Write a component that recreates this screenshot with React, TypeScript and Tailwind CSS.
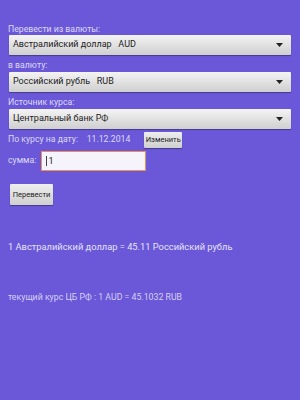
import React from 'react'

function Spinner({ text }: { text: string }) {
  return (
    <div className="mx-[9px] h-[20px] flex items-center justify-between pl-[4px] pr-[8px] bg-gradient-to-b from-[#f4f4f4] to-[#cfcfcf] rounded-[1px] shadow-[0_1px_1px_rgba(0,0,0,0.35)]">
      <span className="text-[9px] text-[#222] whitespace-pre">{text}</span>
      <svg width="7" height="4" viewBox="0 0 7 4">
        <path d="M0 0 L7 0 L3.5 4 Z" fill="#222" />
      </svg>
    </div>
  )
}

function Label({ children }: { children: React.ReactNode }) {
  return <div className="px-[8px] text-[8.7px] leading-[12px] text-[#ddd8f7]">{children}</div>
}

export default function App() {
  return (
    <div className="w-[300px] h-[400px] bg-[#6a58d8] pt-[23px] font-['Roboto',sans-serif] overflow-hidden">
      <Label>Перевести из валюты:</Label>
      <div className="mt-[0px]">
        <Spinner text="Австралийский доллар   AUD" />
      </div>
      <div className="mt-[4px]">
        <Label>в валюту:</Label>
      </div>
      <div className="mt-[1px]">
        <Spinner text="Российский рубль   RUB" />
      </div>
      <div className="mt-[4px]">
        <Label>Источник курса:</Label>
      </div>
      <div className="mt-[1px]">
        <Spinner text="Центральный банк РФ" />
      </div>
      <div className="mt-[3px] flex items-center px-[8px] h-[16px]">
        <span className="text-[8.7px] text-[#ddd8f7] whitespace-pre">По курсу на дату:    11.12.2014</span>
        <div className="ml-[14px] h-[16px] w-[38px] flex items-center justify-center bg-gradient-to-b from-[#eeeeee] to-[#cfcfcf] rounded-[1px] shadow-[0_1px_1px_rgba(0,0,0,0.35)] text-[7.5px] text-[#222]">
          Изменить
        </div>
      </div>
      <div className="mt-[3px] flex items-center px-[8px]">
        <span className="text-[8.7px] text-[#ddd8f7]">сумма:</span>
        <div className="ml-[5px] w-[105px] h-[20px] bg-[#f6f4fb] border-[1.5px] border-[#f09050] flex items-center pl-[4px] text-[9px] text-[#222]">
          <span className="border-l border-[#444] pl-[1px] leading-[10px]">1</span>
        </div>
      </div>
      <div className="mt-[13px] px-[10px]">
        <div className="w-[43px] h-[21px] flex items-center justify-center bg-gradient-to-b from-[#eeeeee] to-[#cfcfcf] rounded-[1px] shadow-[0_1px_1px_rgba(0,0,0,0.35)] text-[7.5px] text-[#222]">
          Перевести
        </div>
      </div>
      <div className="mt-[35px] px-[8px] text-[9.3px] text-[#e6e2fb]">
        1 Австралийский доллар = 45.11 Российский рубль
      </div>
      <div className="mt-[37px] px-[8px] text-[8.75px] text-[#d6d0f4]">
        текущий курс ЦБ РФ : 1 AUD = 45.1032 RUB
      </div>
    </div>
  )
}
